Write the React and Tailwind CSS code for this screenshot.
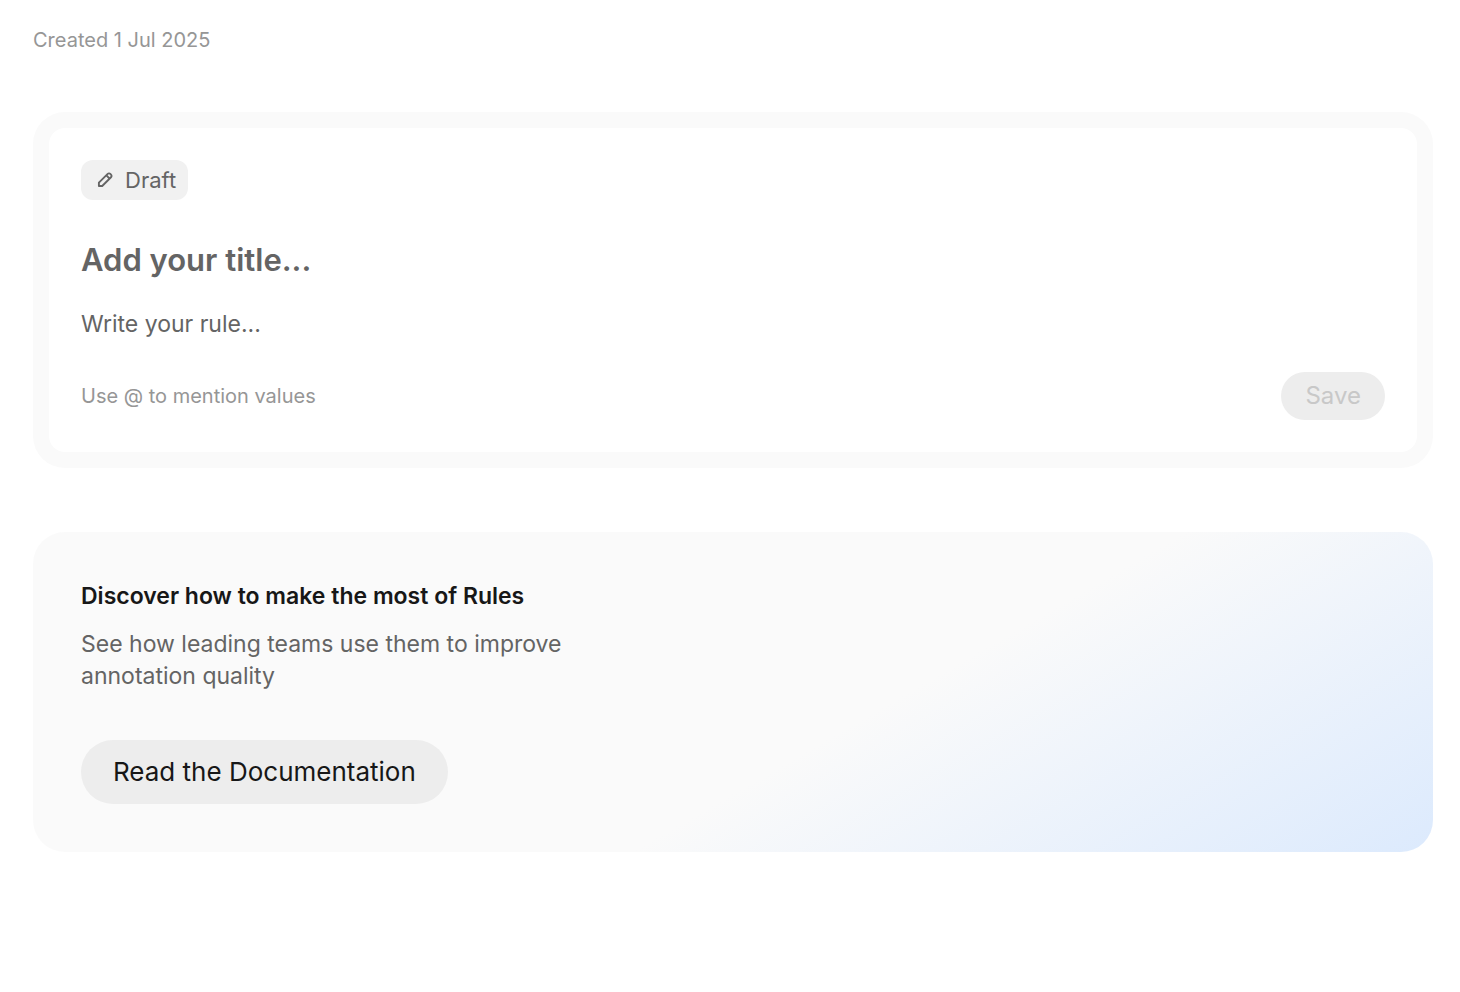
import React from 'react';

function PencilIcon() {
  return (
    <svg viewBox="0 0 16 16" className="w-4 h-4" fill="none" stroke="currentColor" strokeWidth="1.9" strokeLinejoin="round" aria-hidden="true">
      <path d="M1.9 14v-3.3l8.8-8.8a1.8 1.8 0 0 1 2.6 0l.7.7a1.8 1.8 0 0 1 0 2.6L5.2 14Z" />
      <path d="M9.4 3.4l3.1 3.1" />
    </svg>
  );
}

function RuleForm() {
  return (
    <form className="rounded-[32px] bg-[#fafafa] p-4" onSubmit={(e) => e.preventDefault()}>
      <div className="rounded-2xl bg-white p-8">
        <span className="inline-flex h-10 items-center gap-3 rounded-xl bg-[#f1f1f1] pl-4 pr-3 text-[22px] leading-8 text-[#646464] align-top">
          <PencilIcon />
          Draft
        </span>
        <input
          type="text"
          aria-label="Rule title"
          placeholder="Add your title..."
          className="mt-10 block h-10 w-full bg-transparent text-[31px] font-semibold text-[#202020] placeholder:text-[#646464] focus:outline-none"
        />
        <textarea
          rows={1}
          aria-label="Rule"
          placeholder="Write your rule..."
          className="mt-7 block h-8 w-full resize-none bg-transparent text-[23px] leading-8 text-[#202020] placeholder:text-[#646464] focus:outline-none"
        />
        <div className="mt-8 flex items-center justify-between">
          <p className="text-xl text-[#969696]">Use @ to mention values</p>
          <button type="submit" disabled className="h-12 rounded-full bg-[#ededed] px-6 text-2xl text-[#c8c8c8]">
            Save
          </button>
        </div>
      </div>
    </form>
  );
}

function DocsBanner() {
  return (
    <section className="mt-16 rounded-[32px] bg-[linear-gradient(150deg,#fafafa_59%,#dceafd_100%)] p-12">
      <h2 className="text-[23px] leading-8 font-semibold text-[#171717]">Discover how to make the most of Rules</h2>
      <p className="mt-4 max-w-[520px] text-[23px] leading-8 text-[#646464]">
        See how leading teams use them to improve annotation quality
      </p>
      <a href="#docs" className="mt-12 inline-flex h-16 items-center rounded-full bg-[#ededed] px-8 text-[26px] leading-8 text-[#171717] align-top">
        Read the Documentation
      </a>
    </section>
  );
}

function App() {
  return (
    <main className="min-h-screen w-full bg-white pl-[33px] pr-[27px] pt-[26px] font-['Inter',sans-serif] antialiased">
      <p className="mb-[58px] text-xl text-[#969696]">Created 1 Jul 2025</p>
      <RuleForm />
      <DocsBanner />
    </main>
  );
}

export default App;
